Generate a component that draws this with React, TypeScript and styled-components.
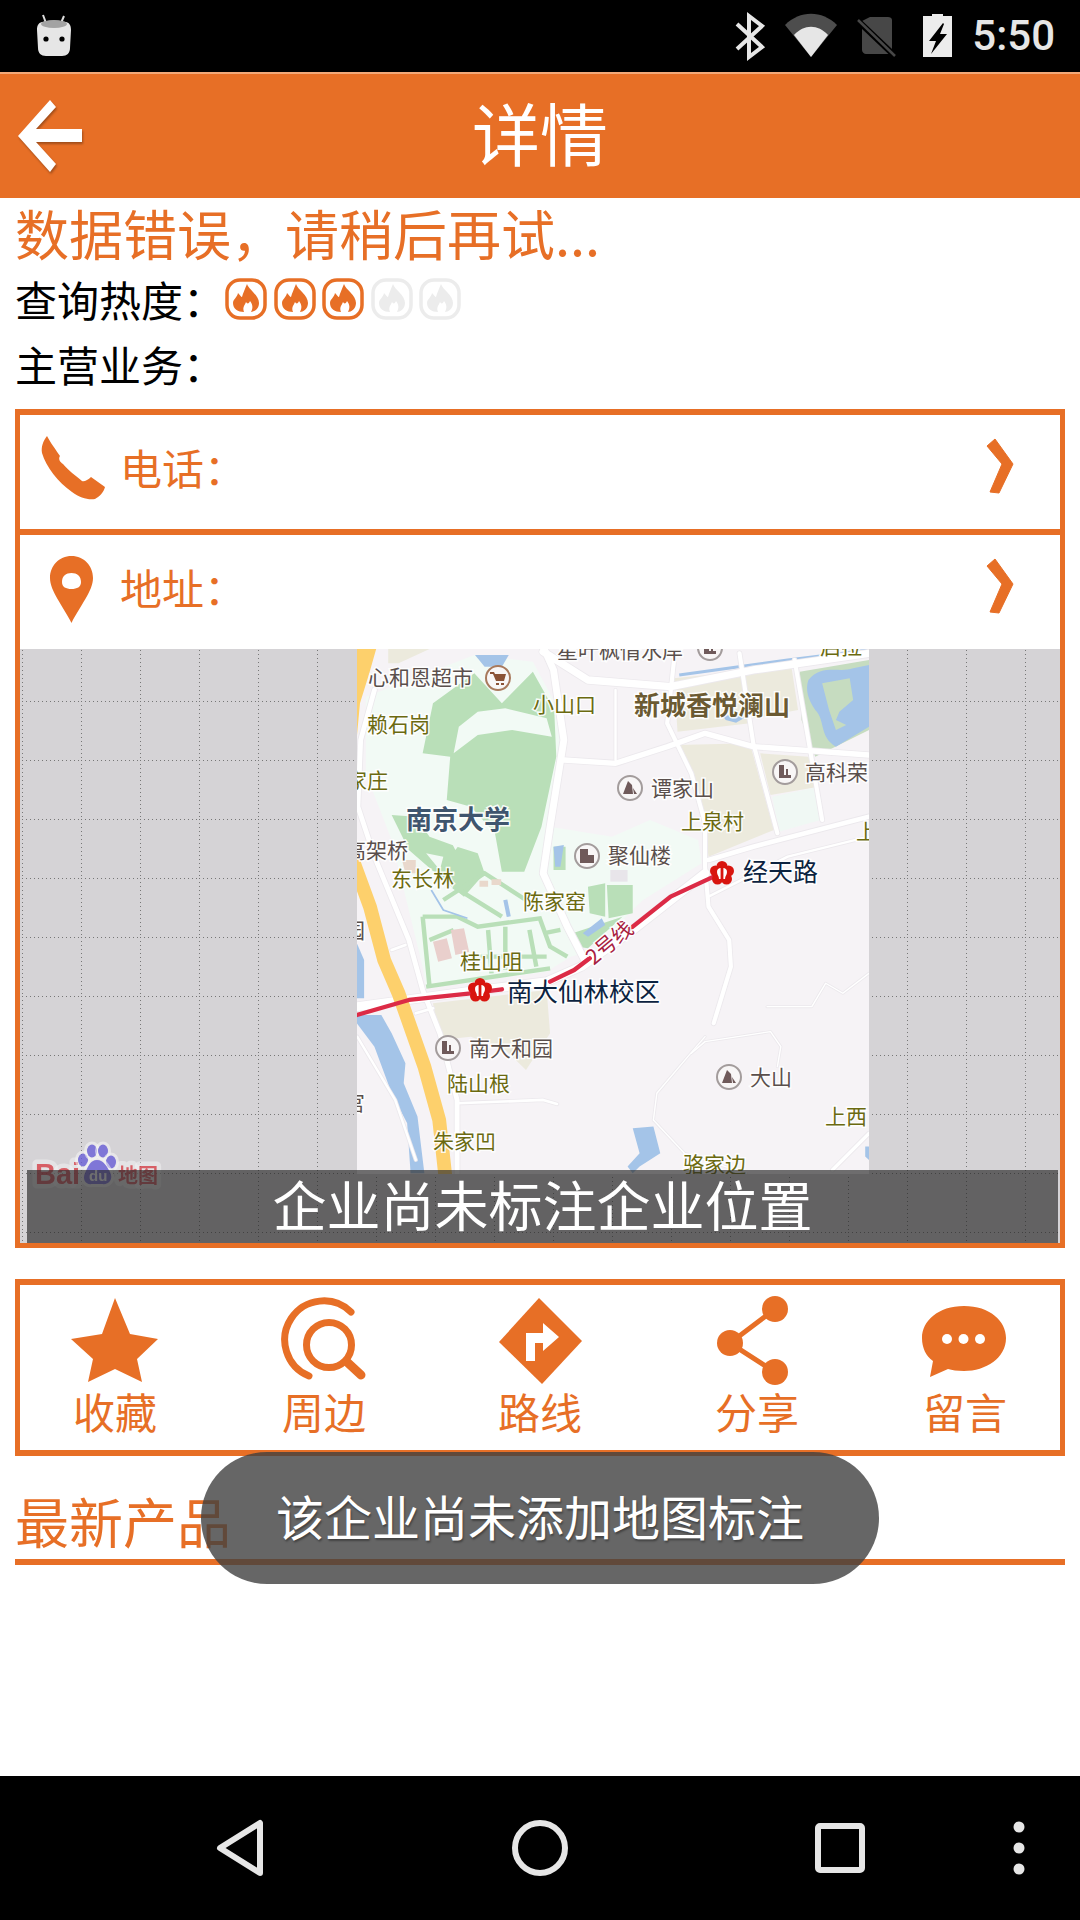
import React from "react";
import styled, { createGlobalStyle } from "styled-components";

const ORANGE = "#e76f26";
const CJK = `"Noto Sans CJK SC", "Noto Sans", sans-serif`;

const Global = createGlobalStyle`
  html, body { margin: 0; padding: 0; background: #fff; }
  body { font-family: ${CJK}; }
  #root { width: 1080px; height: 1920px; }
`;

const Screen = styled.div`
  position: relative;
  width: 1080px;
  height: 1920px;
  display: flex;
  flex-direction: column;
  overflow: hidden;
  background: #fff;
`;

const StatusBar = styled.div`
  height: 72px;
  flex: none;
  background: #000;
  display: flex;
  align-items: center;
  justify-content: space-between;
  padding: 0 25px 0 33px;
`;
const StatusRight = styled.div`
  display: flex;
  align-items: center;
`;
const Clock = styled.span`
  margin-left: 17px;
  font: 500 42px/72px Roboto, sans-serif;
  color: #e6e6e6;
`;

const Header = styled.header`
  height: 126px;
  flex: none;
  box-sizing: border-box;
  background: ${ORANGE};
  border-top: 2px solid #f2a878;
  display: grid;
  grid-template-columns: 1fr auto 1fr;
  align-items: center;
`;
const HeaderTitle = styled.h1`
  margin: 0 0 8px;
  font: 400 68px/80px ${CJK};
  color: #fff;
`;
const BackIcon = styled.svg`
  display: block;
  margin-left: 14px;
  filter: drop-shadow(1px 2px 1px rgba(0, 0, 0, 0.3));
`;

const Content = styled.main`
  flex: 1;
  padding: 0 15px;
  min-height: 0;
`;
const ErrorTitle = styled.div`
  height: 72px;
  font: 400 54px/69px ${CJK};
  color: ${ORANGE};
  white-space: nowrap;
`;
const InfoRow = styled.div`
  height: 60px;
  display: flex;
  align-items: center;
  white-space: nowrap;
`;
const BusinessRow = styled(InfoRow)`
  margin-top: 5px;
`;
const InfoText = styled.span`
  padding-bottom: 3px;
  font: 400 42px/56px ${CJK};
  color: #000;
`;
const Flames = styled.div`
  display: flex;
  gap: 6.5px;
  margin-bottom: 2px;
`;

const DetailBox = styled.section`
  margin-top: 14px;
  border: 5px solid ${ORANGE};
  border-top-width: 6px;
`;
const DetailRow = styled.div`
  height: 114px;
  box-sizing: border-box;
  padding: 0 43px 5px 16px;
  display: flex;
  align-items: center;
  font: 400 42px/56px ${CJK};
  color: ${ORANGE};
`;
const Divider = styled.div`
  height: 6px;
  background: ${ORANGE};
`;
const RowLabel = styled.span`
  flex: 1;
  margin-left: 10px;
  padding-bottom: 5px;
`;
const MapFrame = styled.div`
  position: relative;
  height: 594px;
  overflow: hidden;
`;
const MapDrawing = styled.svg`
  display: block;
`;
const MapCaption = styled.div`
  position: absolute;
  left: 7px;
  right: 2px;
  bottom: 0;
  height: 73px;
  box-sizing: border-box;
  padding-bottom: 5px;
  display: flex;
  align-items: center;
  justify-content: center;
  background: rgba(40, 40, 40, 0.66);
  color: #fff;
  font: 400 54px/66px ${CJK};
  white-space: nowrap;
`;
const MapLabel = styled.text<{ $tone: string; $size?: number; $bold?: boolean }>`
  font-family: ${CJK};
  font-size: ${(p) => p.$size ?? 21}px;
  font-weight: ${(p) => (p.$bold ? 700 : 400)};
  fill: ${(p) => p.$tone};
  stroke: rgba(255, 255, 255, 0.9);
  stroke-width: 3px;
  paint-order: stroke;
`;
const LogoText = styled.text<{ $size: number; $family: string }>`
  font-family: ${(p) => p.$family};
  font-size: ${(p) => p.$size}px;
  font-weight: 700;
  fill: #d8434b;
  stroke: rgba(255, 255, 255, 0.45);
  stroke-width: 9px;
  stroke-linejoin: round;
  paint-order: stroke;
`;

const ActionBox = styled.section`
  margin-top: 31px;
  height: 177px;
  box-sizing: border-box;
  border: 5px solid ${ORANGE};
  border-top-width: 6px;
  border-bottom-width: 6px;
  padding: 11px 0 0 53px;
  display: flex;
`;
const ActionItem = styled.div<{ $lead: number }>`
  width: 84px;
  margin-left: ${(p) => p.$lead}px;
  display: flex;
  flex-direction: column;
  align-items: center;
`;
const ActionIcon = styled.svg`
  display: block;
  flex: none;
  margin: 0 -8px;
`;
const ActionLabel = styled.span`
  margin-top: 0;
  font: 400 42px/50px ${CJK};
  color: ${ORANGE};
  white-space: nowrap;
`;
const SectionHeading = styled.h2`
  margin: 34px 0 0;
  height: 69px;
  border-bottom: 6px solid ${ORANGE};
  font: 400 54px/62px ${CJK};
  color: ${ORANGE};
`;

const Toast = styled.div`
  position: absolute;
  left: 201px;
  top: 1452px;
  width: 678px;
  height: 132px;
  box-sizing: border-box;
  padding-bottom: 6px;
  border-radius: 66px;
  display: flex;
  align-items: center;
  justify-content: center;
  background: rgba(64, 64, 64, 0.8);
  color: #fff;
  font: 400 48px/60px ${CJK};
  text-shadow: 1px 2px 2px rgba(0, 0, 0, 0.35);
  white-space: nowrap;
`;

const NavBar = styled.nav`
  height: 144px;
  flex: none;
  background: #000;
  display: flex;
  align-items: center;
  gap: 240px;
  padding-left: 210px;
`;
const NavIcon = styled.svg`
  display: block;
  flex: none;
`;
const NavDots = styled(NavIcon)`
  margin-left: -121px;
`;

const Flame = ({ on }: { on: boolean }) => {
  const c = on ? ORANGE : "#ececec";
  return (
    <svg width="42" height="42" viewBox="0 0 42 42">
      <rect x="2" y="2" width="38" height="38" rx="13" fill="none" stroke={c} strokeWidth="3.5" />
      <path
        fill={c}
        d="M22 6C24 12 34 17 34 25C34 31 29 34 26 34C28 30 28 27 25 23C24 26 22 26 21 24C20 27 17 29 19 34C13 34 8 31 8 25C8 21 12 20 13 15C15 17 16 19 17 19C18 15 20 11 22 6Z"
      />
    </svg>
  );
};

const Chevron = ({ top }: { top: number }) => (
  <svg width="32" height="70" viewBox={`985 ${top} 32 70`}>
    <path
      fill={ORANGE}
      stroke={ORANGE}
      strokeWidth="1"
      strokeLinejoin="round"
      d={`M995 ${top + 4}L1013 ${top + 29}L999 ${top + 58}L990 ${top + 57}L1002 ${top + 29}L987 ${top + 11}Z`}
    />
  </svg>
);

type Poi = { x: number; y: number; kind: "mount" | "tower" | "block" | "cart" };
const pois: Poi[] = [
  { x: 710, y: 648, kind: "tower" },
  { x: 498, y: 678, kind: "cart" },
  { x: 630, y: 788, kind: "mount" },
  { x: 785, y: 772, kind: "tower" },
  { x: 587, y: 856, kind: "block" },
  { x: 448, y: 1048, kind: "tower" },
  { x: 729, y: 1077, kind: "mount" },
];

const PoiMark = ({ x, y, kind }: Poi) => {
  const ink = kind === "cart" ? "#8a5236" : "#6f5a5a";
  return (
    <g transform={`translate(${x} ${y})`}>
      <circle r="12" fill="#f8f6f6" stroke={kind === "cart" ? "#a8795c" : "#a39c9c"} strokeWidth="2" />
      {kind === "mount" && <path fill={ink} d="M-7 6L-2 -7L2 -3L3 6ZM3 0L7 6H4Z" />}
      {kind === "tower" && <path fill={ink} d="M-6 6V-7H-1V3H1V-3H3V3H6V6Z" />}
      {kind === "block" && <path fill={ink} d="M-7 7V-7H1V-1H7V7Z" />}
      {kind === "cart" && <path fill={ink} d="M-8 -6H-4L-3 -4H8L6 3H-2L-5 -4H-8ZM-2 5H1V7H-2ZM3 5H6V7H3Z" />}
    </g>
  );
};

const Metro = ({ x, y }: { x: number; y: number }) => (
  <g transform={`translate(${x} ${y})`} fill="#d8150f">
    <circle cx="0" cy="-6.5" r="5.5" />
    <circle cx="6.5" cy="-2" r="5.5" />
    <circle cx="4.5" cy="6" r="5.5" />
    <circle cx="-4.5" cy="6" r="5.5" />
    <circle cx="-6.5" cy="-2" r="5.5" />
    <circle r="6" />
    <path fill="#fff" d="M-5 -1C-5 -4 -3 -5 -1.4 -5V6H-3C-3 3 -5 2 -5 -1ZM5 -1C5 -4 3 -5 1.4 -5V6H3C3 3 5 2 5 -1Z" />
  </g>
);

const G3_ROADS: [string, number][] = [
  ["M590 20L620 90L650 300L610 560L590 700L660 860L710 960", 20],
  ["M590 35L720 120L960 140L1200 90L1536 40", 22],
  ["M650 360L800 370L950 320L1060 280L1200 320L1536 345", 16],
  ["M970 60L950 250L1020 400L1060 550L1060 680L1070 800L1130 900L1135 980L1085 1150", 12],
  ["M1160 40L1200 310L1270 580", 12],
  ["M1320 60L1400 540", 12],
  ["M800 150L800 360", 7],
  ["M100 150L60 300L52 500L100 650L200 900L240 1050L290 1180L340 1380L340 1600", 14],
  ["M1070 660L1200 620L1536 530", 14],
  ["M1070 770L1300 650L1536 590", 7],
  ["M49 1100L370 1055L600 1025L700 980L850 870L1060 700", 26],
  ["M150 930L190 915", 8],
  ["M340 1390L590 1380L630 1392", 8],
  ["M220 1120L270 1105", 8],
  ["M910 1440L920 1360L1010 1250L1060 1190", 4],
  ["M1020 1240L1060 1205L1250 1175L1280 1220L1270 1280", 4],
  ["M910 1440L1000 1540L1180 1600", 4],
  ["M1240 1100L1370 1100L1410 1030L1460 1060L1536 1000", 4],
  ["M1430 1590L1536 1480", 10],
  ["M50 1190L160 1380L220 1560", 7],
];

const G3Map = () => (
  <g transform="translate(340 640) scale(0.3444 0.3333)">
    <path fill="#eceadd" d="M140 27H260L170 70H140Z" />
    <path fill="#eceadd" d="M970 115L1160 95L1190 250L980 275ZM1170 90L1310 75L1330 210L1200 235Z" />
    <path fill="#eceadd" d="M980 315L1190 310L1260 570L1070 650L1050 480Z" />
    <path fill="#eceadd" d="M1220 340L1360 350L1390 440L1250 465Z" />
    <path fill="#f0f8f4" d="M1255 470L1390 440L1395 540L1275 575Z" />
    <path fill="#eceadd" d="M270 1090L600 1050L610 1180L540 1290L480 1230L380 1190L290 1200Z" />

    <path fill="#f2faf5" d="M75 170L390 45L560 65L630 200L645 350L605 560L595 700L665 860L705 940L670 950L600 995L250 1045L240 980L150 600L75 400Z" />
    <path fill="#f2faf5" d="M610 560L790 590L900 540L1040 600L1050 670L880 780L800 860L680 940L630 820L600 700Z" />
    <path fill="#b9dfb8" d="M240 340L270 190L390 100L470 190L560 95L622 210L628 350L585 560L535 695L470 695L450 580L380 500L310 480L320 350Z" />
    <path fill="#f2faf5" d="M345 260L400 215L480 205L600 235L615 290L500 270L400 285L330 340Z" />
    <path fill="#b9dfb8" d="M150 525L220 530L260 590L340 620L400 640L420 700L360 770L300 720L200 630Z" />
    <path fill="#f2faf5" d="M320 600L350 610L335 630ZM250 640L300 650L290 690Z" />
    <path fill="#b9dfb8" d="M720 740L770 730L770 830L725 820ZM775 735H850V820L780 835Z" />
    <path fill="#b9dfb8" d="M620 620H655V690H620ZM675 880L820 830L720 925L690 920Z" />
    <g fill="none" stroke="#b9dfb8" strokeWidth="13">
      <path d="M240 830H340L400 860L580 835L610 920L660 950M250 1040L610 985M300 780L420 700L540 780M480 860V990M430 870L440 1000M550 870L570 980M240 830L260 1040M330 740L470 830M380 950H600M260 900L330 870M590 880L640 870" />
    </g>
    <path fill="#e9cfcc" d="M270 905L310 895L325 955L285 965ZM322 870L360 865L375 935L335 945Z" />
    <path fill="#e9d8cc" d="M405 722H430V740H405ZM440 718H468V735H440ZM180 660H220V700H190Z" />
    <path fill="#e8e5ea" d="M785 690H835V725H785Z" />

    <path fill="#c6dcc0" d="M1335 95L1536 60V270L1380 350L1340 240Z" />
    <path fill="#a4c4e8" d="M1360 120C1400 70 1450 100 1490 85L1536 75V260L1440 320C1390 290 1410 240 1380 210C1360 180 1350 150 1360 120Z" />
    <path fill="#c6dcc0" d="M1400 130L1480 115L1490 180L1450 215L1440 240L1470 255L1440 270L1420 210Z" />
    <path fill="none" stroke="#a4c4e8" strokeWidth="9" d="M985 105L1090 90L1300 60L1536 30" />
    <path fill="#a4c4e8" d="M392 45H490L470 80H420Z" />
    <path fill="#a4c4e8" d="M1110 225L1180 230L1150 248L1120 240Z" />
    <path fill="#a4c4e8" d="M620 620L650 615L640 680L625 680ZM705 880L760 835L770 855L720 890Z" />
    <path fill="none" stroke="#a4c4e8" strokeWidth="5" d="M265 750L300 810L370 835" />
    <path fill="none" stroke="#a4c4e8" strokeWidth="12" d="M480 780L490 830" />
    <path fill="#a4c4e8" d="M49 910L70 960V1075H49Z" />
    <path fill="#a4c4e8" d="M49 1125L120 1125L150 1180L190 1270L185 1330L225 1430L245 1600H205L195 1450L150 1360L100 1220L49 1150Z" />
    <path fill="#a4c4e8" d="M850 1465L910 1460L930 1540L870 1580L850 1600L835 1580L870 1540Z" />
    <path fill="#a4c4e8" d="M1525 1520H1536V1560L1525 1550Z" />

    <g fill="none" strokeLinecap="round" strokeLinejoin="round">
      {G3_ROADS.map(([d, w], i) => (
        <path key={`c${i}`} d={d} stroke="#ece9ed" strokeWidth={w + 5} />
      ))}
      {G3_ROADS.map(([d, w], i) => (
        <path key={`r${i}`} d={d} stroke="#fff" strokeWidth={w} />
      ))}
      <path d="M49 27L105 27L85 100L58 190L49 290Z" stroke="none" fill="#fdd06c" />
      <path d="M30 640L87 800L128 960L170 1060L245 1280L288 1440L307 1620" stroke="#fdd06c" strokeWidth="40" strokeLinecap="butt" />
      <path d="M49 1125L200 1080L380 1060L470 1048M610 1025L680 990L725 955M840 868L960 770L1085 710" stroke="#dc2b46" strokeWidth="13" />
    </g>
  </g>
);

const MapTile = () => (
  <g clipPath="url(#tile)">
    <rect x="357" y="649" width="512" height="525" fill="#f6f3f6" />
    <G3Map />
    {pois.map((p, i) => (
      <PoiMark key={i} {...p} />
    ))}
    <Metro x={722} y={873} />
    <Metro x={480} y={990} />
    <MapLabel $tone="#5a4f4c" x="557" y="658">星叶枫情水岸</MapLabel>
    <MapLabel $tone="#6b6a10" x="820" y="654">启拉</MapLabel>
    <MapLabel $tone="#5a4f4c" x="368" y="685">心和恩超市</MapLabel>
    <MapLabel $tone="#6b6a10" x="533" y="712">小山口</MapLabel>
    <MapLabel $tone="#6b5a32" $size={26} $bold x="634" y="715">新城香悦澜山</MapLabel>
    <MapLabel $tone="#6b6a10" x="367" y="732">赖石岗</MapLabel>
    <MapLabel $tone="#6b6a10" x="346" y="788">家庄</MapLabel>
    <MapLabel $tone="#5a4f4c" x="651" y="796">谭家山</MapLabel>
    <MapLabel $tone="#5a4f4c" x="805" y="780">高科荣</MapLabel>
    <MapLabel $tone="#3f556e" $size={26} $bold x="406" y="829">南京大学</MapLabel>
    <MapLabel $tone="#6b6a10" x="681" y="829">上泉村</MapLabel>
    <MapLabel $tone="#6b6a10" x="856" y="839">上</MapLabel>
    <MapLabel $tone="#5a4f4c" x="345" y="858">高架桥</MapLabel>
    <MapLabel $tone="#5a4f4c" x="608" y="863">聚仙楼</MapLabel>
    <MapLabel $tone="#0c2340" $size={25} x="743" y="881">经天路</MapLabel>
    <MapLabel $tone="#6b6a10" x="391" y="886">东长林</MapLabel>
    <MapLabel $tone="#6b6a10" x="523" y="909">陈家窑</MapLabel>
    <MapLabel $tone="#5a4f4c" x="344" y="938">园</MapLabel>
    <MapLabel $tone="#6b6a10" x="460" y="969">桂山咀</MapLabel>
    <MapLabel $tone="#0c2340" $size={25.5} x="507" y="1001">南大仙林校区</MapLabel>
    <MapLabel $tone="#a82040" transform="rotate(-40 610 943)" x="583" y="950">2号线</MapLabel>
    <MapLabel $tone="#5a4f4c" x="469" y="1056">南大和园</MapLabel>
    <MapLabel $tone="#6b6a10" x="447" y="1091">陆山根</MapLabel>
    <MapLabel $tone="#5a4f4c" x="750" y="1085">大山</MapLabel>
    <MapLabel $tone="#5a4f4c" x="344" y="1110">宫</MapLabel>
    <MapLabel $tone="#6b6a10" x="825" y="1124">上西</MapLabel>
    <MapLabel $tone="#6b6a10" x="433" y="1149">朱家凹</MapLabel>
    <MapLabel $tone="#6b6a10" x="683" y="1172">骆家边</MapLabel>
  </g>
);

const BaiduLogo = () => (
  <g opacity="0.8">
    <LogoText $size={29} $family={`"Liberation Sans", sans-serif`} x="35" y="1184">Bai</LogoText>
    <LogoText $size={20} $family={CJK} x="118" y="1183">地图</LogoText>
    <g stroke="rgba(255,255,255,.55)" strokeWidth="6" style={{ paintOrder: "stroke" }} fill="#6a5fd8">
      <ellipse cx="83" cy="1160" rx="5" ry="6.5" />
      <ellipse cx="92" cy="1151" rx="5" ry="6.5" />
      <ellipse cx="103" cy="1151" rx="5" ry="6.5" />
      <ellipse cx="111" cy="1162" rx="5" ry="6.5" />
      <path d="M97 1160C104 1160 107 1167 110 1172C114 1180 108 1185 102 1184H92C86 1185 82 1180 85 1173C88 1167 90 1160 97 1160Z" />
    </g>
    <LogoText $size={15} $family={`"Liberation Sans", sans-serif`} x="89" y="1181" style={{ fill: "#fff", stroke: "none" }}>du</LogoText>
  </g>
);

const MapView = () => (
  <MapDrawing width="1040" height="594" viewBox="20 649 1040 594">
    <defs>
      <pattern id="grid" patternUnits="userSpaceOnUse" x="22" y="701" width="59" height="59">
        <path d="M0.5 0V59M0 0.5H59" stroke="#777" strokeWidth="1" strokeDasharray="1 3" fill="none" />
      </pattern>
      <clipPath id="tile">
        <rect x="357" y="649" width="512" height="525" />
      </clipPath>
    </defs>
    <rect x="20" y="649" width="1040" height="594" fill="#d5d3d6" />
    <rect x="20" y="649" width="1040" height="594" fill="url(#grid)" />
    <MapTile />
    <BaiduLogo />
  </MapDrawing>
);

const actions: { label: string; cx: number; lead: number; icon: React.ReactNode }[] = [
  {
    label: "收藏",
    cx: 115,
    lead: 0,
    icon: <path d="M115 1298L130 1334L158 1339L137 1359L142 1382L115 1369L88 1382L93 1359L71 1339L102 1334Z" fill={ORANGE} />,
  },
  {
    label: "周边",
    cx: 324,
    lead: 125,
    icon: (
      <g fill="none" stroke={ORANGE} strokeWidth="7" strokeLinecap="round">
        <circle cx="329" cy="1345" r="22.5" />
        <path d="M347 1362L361 1375" strokeWidth="9" />
        <path d="M351 1312A39 39 0 1 0 309 1376" />
      </g>
    ),
  },
  {
    label: "路线",
    cx: 540,
    lead: 132,
    icon: (
      <>
        <path d="M539 1298L582 1341L542 1384L499 1342Z" fill={ORANGE} />
        <path d="M526 1361V1333H543V1323L559 1337L543 1351V1343H535V1361Z" fill="#fff" />
      </>
    ),
  },
  {
    label: "分享",
    cx: 757,
    lead: 133,
    icon: (
      <g fill={ORANGE}>
        <path d="M775 1309L730 1343L775 1372" fill="none" stroke={ORANGE} strokeWidth="5" />
        <circle cx="775" cy="1309" r="13" />
        <circle cx="730" cy="1343" r="13" />
        <circle cx="775" cy="1372" r="13" />
      </g>
    ),
  },
  {
    label: "留言",
    cx: 965,
    lead: 124,
    icon: (
      <>
        <path d="M964 1306C990 1306 1006 1321 1006 1338C1006 1358 986 1371 964 1371C957 1371 952 1370 948 1369L930 1377L933 1361C926 1356 922 1348 922 1338C922 1321 938 1306 964 1306Z" fill={ORANGE} />
        <g fill="#fff">
          <circle cx="947" cy="1339" r="5" />
          <circle cx="963.5" cy="1339" r="5" />
          <circle cx="980" cy="1339" r="5" />
        </g>
      </>
    ),
  },
];

export default function App() {
  return (
    <Screen>
      <Global />
      <StatusBar>
        <svg width="40" height="46" viewBox="33 10 40 46">
          <path d="M43 12L46 20M64 13L61 20" stroke="#ddd" strokeWidth="2" />
          <path d="M42 19C50 17 58 17 66 19C70 20 71 23 71 27L70 45C70 50 67 53 62 53H46C41 53 38 50 38 45L37 27C37 23 38 20 42 19Z" fill="#e6e6e6" />
          <ellipse cx="54" cy="21" rx="13" ry="4" fill="#a3a3a3" />
          <circle cx="46" cy="36" r="2.6" fill="#000" />
          <circle cx="62" cy="36" r="2.6" fill="#000" />
        </svg>
        <StatusRight>
          <svg width="222" height="72" viewBox="733 0 222 72">
            <path d="M737 24L762 47L749 57V16L762 26L737 49" fill="none" stroke="#e6e6e6" strokeWidth="4" />
            <path d="M785 25C800 10 822 10 837 25L811 57Z" fill="#4d4d4d" />
            <path d="M794 35C804 24 818 24 828 35L811 57Z" fill="#e6e6e6" />
            <path d="M862 21V50C862 52 864 54 866 54H888C890 54 892 52 892 50V20C892 18 890 17 888 17H870Z" fill="#474747" />
            <path d="M856 19L896 57" stroke="#000" strokeWidth="6" />
            <path d="M858 20L895 56" stroke="#474747" strokeWidth="2.5" />
            <path d="M932 14H943V16H952V57H923V16H932Z" fill="#ececec" />
            <path d="M943 23L929 41H936L931 54L947 34H940L944 24Z" fill="#000" />
          </svg>
          <Clock>5:50</Clock>
        </StatusRight>
      </StatusBar>

      <Header>
        <BackIcon width="72" height="80" viewBox="14 95 72 80">
          <path fill="#fff" d="M18 135L50 99L56 106L36 128H82V141H36L56 163L50 171Z" />
        </BackIcon>
        <HeaderTitle>详情</HeaderTitle>
      </Header>

      <Content>
        <ErrorTitle>数据错误，请稍后再试...</ErrorTitle>
        <InfoRow>
          <InfoText>查询热度：</InfoText>
          <Flames>
            <Flame on />
            <Flame on />
            <Flame on />
            <Flame on={false} />
            <Flame on={false} />
          </Flames>
        </InfoRow>
        <BusinessRow>
          <InfoText>主营业务：</InfoText>
        </BusinessRow>

        <DetailBox>
          <DetailRow>
            <svg width="74" height="74" viewBox="36 433 74 74">
              <path
                fill={ORANGE}
                d="M47 436C50 442 56 450 60 456C58 459 60 462 63 464C68 470 76 476 82 481C84 482 88 480 91 477L105 487C104 492 99 497 95 499C88 500 80 498 72 492C58 482 46 467 42 453C41 447 43 441 47 436Z"
              />
            </svg>
            <RowLabel>电话：</RowLabel>
            <Chevron top={434} />
          </DetailRow>
          <Divider />
          <DetailRow>
            <svg width="74" height="74" viewBox="36 552 74 74">
              <path
                fill={ORANGE}
                fillRule="evenodd"
                d="M71.5 555C84 555 93 565 93 577C93 590 80 605 71.5 622C63 605 50 590 50 577C50 565 59 555 71.5 555ZM71.5 572C66 572 62 575 62 581C62 586 66 588 71.5 588C77 588 81 586 81 581C81 575 77 572 71.5 572Z"
              />
            </svg>
            <RowLabel>地址：</RowLabel>
            <Chevron top={555} />
          </DetailRow>
          <MapFrame>
            <MapView />
            <MapCaption>企业尚未标注企业位置</MapCaption>
          </MapFrame>
        </DetailBox>

        <ActionBox>
          {actions.map((a) => (
            <ActionItem key={a.label} $lead={a.lead}>
              <ActionIcon width="100" height="90" viewBox={`${a.cx - 50} 1296 100 90`}>
                {a.icon}
              </ActionIcon>
              <ActionLabel>{a.label}</ActionLabel>
            </ActionItem>
          ))}
        </ActionBox>

        <SectionHeading>最新产品</SectionHeading>
      </Content>

      <Toast>该企业尚未添加地图标注</Toast>

      <NavBar>
        <NavIcon width="60" height="64" viewBox="210 1816 60 64">
          <path d="M260 1823V1873L220 1848Z" fill="none" stroke="#e6e6e6" strokeWidth="6" strokeLinejoin="round" />
        </NavIcon>
        <NavIcon width="60" height="64" viewBox="510 1816 60 64">
          <circle cx="540" cy="1848" r="25" fill="none" stroke="#e6e6e6" strokeWidth="6" />
        </NavIcon>
        <NavIcon width="60" height="64" viewBox="810 1816 60 64">
          <rect x="818" y="1826" width="44" height="44" rx="2" fill="none" stroke="#e6e6e6" strokeWidth="6" />
        </NavIcon>
        <NavDots width="60" height="64" viewBox="989 1816 60 64">
          <g fill="#e6e6e6">
            <circle cx="1019" cy="1827" r="5.5" />
            <circle cx="1019" cy="1848" r="5.5" />
            <circle cx="1019" cy="1869" r="5.5" />
          </g>
        </NavDots>
      </NavBar>
    </Screen>
  );
}
